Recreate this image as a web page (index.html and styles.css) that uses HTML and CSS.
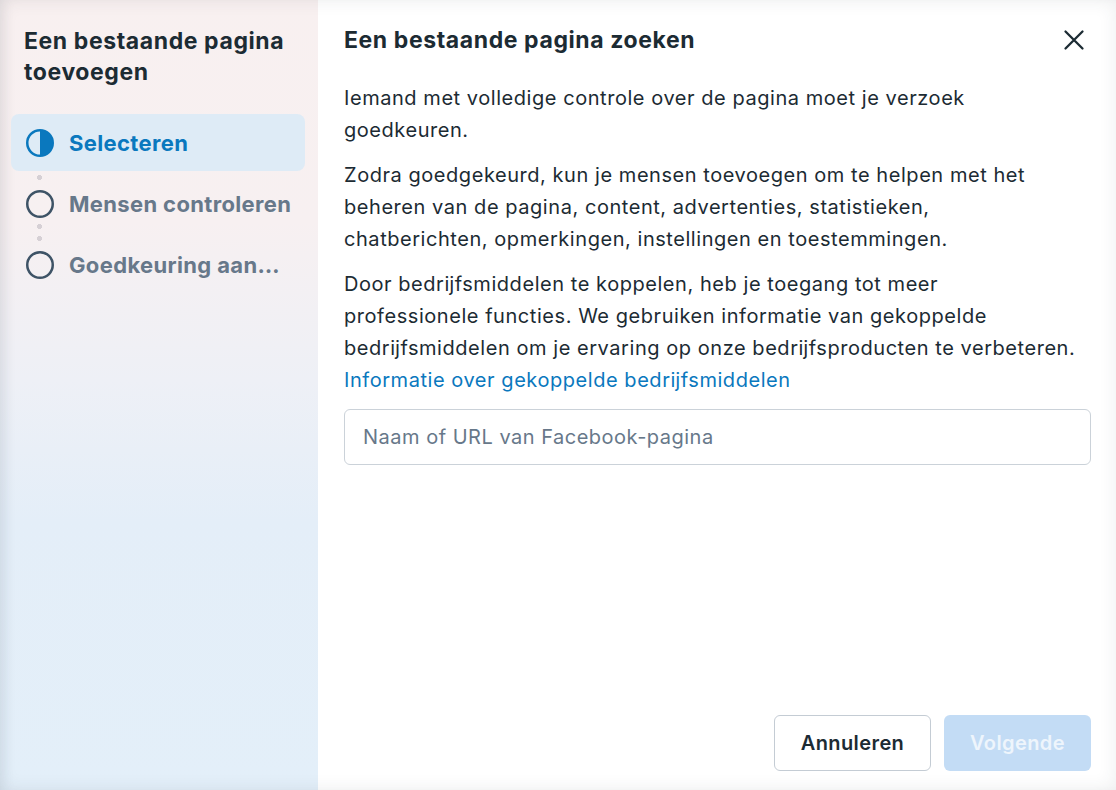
FILE: index.html
```html
<!DOCTYPE html>
<html lang="nl">
<head>
<meta charset="utf-8">
<title>Een bestaande pagina toevoegen</title>
<link rel="stylesheet" href="styles.css">
</head>
<body>
<div class="dialog">
  <aside class="sidebar">
    <h2 class="side-title">Een bestaande pagina toevoegen</h2>
    <ol class="steps">
      <li class="step active">
        <svg class="step-icon" viewBox="0 0 28 28" width="28" height="28"><circle cx="14" cy="14" r="12.75" fill="none" stroke="#0a78be" stroke-width="2.5"/><path d="M14 1.25 A12.75 12.75 0 0 1 14 26.75 Z" fill="#0a78be"/></svg>
        <span class="step-label">Selecteren</span>
      </li>
      <li class="step">
        <svg class="step-icon" viewBox="0 0 28 28" width="28" height="28"><circle cx="14" cy="14" r="12.75" fill="none" stroke="#3e5366" stroke-width="2.5"/></svg>
        <span class="step-label">Mensen controleren</span>
      </li>
      <li class="step">
        <svg class="step-icon" viewBox="0 0 28 28" width="28" height="28"><circle cx="14" cy="14" r="12.75" fill="none" stroke="#3e5366" stroke-width="2.5"/></svg>
        <span class="step-label">Goedkeuring aan…</span>
      </li>
    </ol>
  </aside>
  <main class="main">
    <header class="main-head">
      <h1 class="main-title">Een bestaande pagina zoeken</h1>
      <button class="close" aria-label="Sluiten">
        <svg viewBox="0 0 24 24" width="24" height="24"><path d="M3.5 3.5 L20.5 20.5 M20.5 3.5 L3.5 20.5" stroke="#1c2b33" stroke-width="2.3" stroke-linecap="round" fill="none"/></svg>
      </button>
    </header>
    <div class="body-text">
      <p>Iemand met volledige controle over de pagina moet je verzoek<br>goedkeuren.</p>
      <p>Zodra goedgekeurd, kun je mensen toevoegen om te helpen met het<br>beheren van de pagina, content, advertenties, statistieken,<br>chatberichten, opmerkingen, instellingen en toestemmingen.</p>
      <p>Door bedrĳfsmiddelen te koppelen, heb je toegang tot meer<br>professionele functies. We gebruiken informatie van gekoppelde<br>bedrĳfsmiddelen om je ervaring op onze bedrĳfsproducten te verbeteren.<br><a class="link" href="#">Informatie over gekoppelde bedrĳfsmiddelen</a></p>
    </div>
    <input class="search" type="text" placeholder="Naam of URL van Facebook-pagina">
    <footer class="actions">
      <button class="btn btn-secondary">Annuleren</button>
      <button class="btn btn-primary" disabled>Volgende</button>
    </footer>
  </main>
  <div class="edge-shade"></div>
</div>
</body>
</html>
```

FILE: styles.css
```css
* { box-sizing: border-box; }

html, body {
  margin: 0;
  padding: 0;
  width: 1116px;
  height: 790px;
  overflow: hidden;
  background: #ffffff;
}

body {
  font-family: "Inter", "Roboto", "Liberation Sans", sans-serif;
  color: #1c2b33;
}

.dialog {
  position: relative;
  display: flex;
  width: 1116px;
  height: 790px;
  background: #ffffff;
}

.edge-shade {
  position: absolute;
  inset: 0;
  pointer-events: none;
  box-shadow: inset 0 0 18px rgba(40, 50, 70, 0.09), inset 10px 0 14px -8px rgba(40, 50, 80, 0.08);
}

/* Sidebar */
.sidebar {
  width: 318px;
  flex: none;
  padding: 26px 13px 0 11px;
  background: linear-gradient(180deg, #f8f0f0 0%, #f7f0f1 28%, #eef0f6 48%, #e4eef8 66%, #e3eff9 100%);
}

.side-title {
  margin: 0 0 26px 13px;
  font-size: 23px;
  font-weight: 700;
  line-height: 31px;
  color: #1c2b33;
  letter-spacing: 0.6px;
}

.steps {
  list-style: none;
  margin: 0;
  padding: 0;
  display: flex;
  flex-direction: column;
  gap: 4px;
}

.step {
  position: relative;
  display: flex;
  align-items: center;
  gap: 15px;
  height: 57px;
  padding: 0 15px;
  border-radius: 8px;
  font-size: 22px;
  font-weight: 700;
  letter-spacing: 0.35px;
  color: #67788a;
  white-space: nowrap;
}

.step + .step::before {
  content: "";
  position: absolute;
  left: 26px;
  top: -12px;
  width: 5px;
  height: 17px;
  background: radial-gradient(circle at 2.5px 2.5px, #d6d0d5 2.4px, transparent 2.6px) 0 0 / 5px 12px repeat-y;
}

.step.active {
  z-index: 1;
  background: #deebf6;
  color: #0a78be;
}

.step-icon { flex: none; display: block; }

.step-label { line-height: 24px; }

/* Main */
.main {
  flex: 1;
  display: flex;
  flex-direction: column;
  padding: 24px 25px 19px 26px;
}

.main-head {
  display: flex;
  align-items: center;
  justify-content: space-between;
  height: 32px;
}

.main-title {
  margin: 0;
  font-size: 23px;
  font-weight: 700;
  line-height: 32px;
  color: #1c2b33;
  letter-spacing: 0.6px;
}

.close {
  border: 0;
  background: transparent;
  padding: 0;
  margin-right: 5px;
  width: 24px;
  height: 24px;
  cursor: pointer;
}
.close svg { display: block; }

.body-text {
  margin-top: 26px;
}

.body-text p {
  margin: 0 0 13px 0;
  font-size: 20px;
  line-height: 32px;
  letter-spacing: 0.55px;
  color: #1c2b33;
  white-space: nowrap;
}

.link {
  color: #0a78be;
  text-decoration: none;
}

.search {
  height: 56px;
  width: 100%;
  border: 1px solid #cbd2d9;
  border-radius: 6px;
  padding: 0 18px;
  font-family: inherit;
  font-size: 20px;
  letter-spacing: 0.5px;
  color: #1c2b33;
  background: #ffffff;
  outline: none;
}
.search::placeholder { color: #67788a; }

.actions {
  margin-top: auto;
  display: flex;
  justify-content: flex-end;
  gap: 13px;
}

.btn {
  height: 56px;
  border-radius: 6px;
  font-family: inherit;
  font-size: 20px;
  font-weight: 600;
  letter-spacing: 0.4px;
  padding: 0 20px;
}

.btn-secondary {
  width: 157px;
  background: #ffffff;
  border: 1px solid #c4ccd4;
  color: #1c2b33;
}

.btn-primary {
  width: 147px;
  background: #c3dcf5;
  border: 0;
  color: #eef5fc;
}
```
